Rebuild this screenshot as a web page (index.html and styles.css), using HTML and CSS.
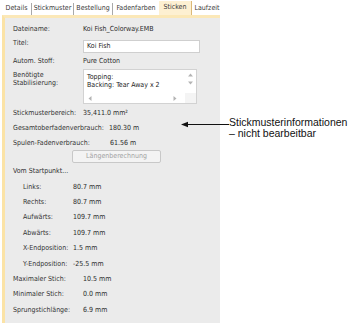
FILE: index.html
```html
<!DOCTYPE html>
<html lang="de">
<head>
<meta charset="utf-8">
<title>Sticken</title>
<link rel="stylesheet" href="styles.css">
</head>
<body>
<div class="screen">
  <div class="dialog">
    <div class="tabs">
      <div class="tab t1">Details</div>
      <div class="tab t2">Stickmuster</div>
      <div class="tab t3">Bestellung</div>
      <div class="tab t4">Fadenfarben</div>
      <div class="tab t5 active">Sticken</div>
      <div class="tab t6">Laufzeit</div>
    </div>
    <div class="panel">
      <div class="row r-file"><span class="lbl">Dateiname:</span><span class="val">Koi Fish_Colorway.EMB</span></div>
      <div class="row r-title"><span class="lbl lbl-top">Titel:</span><div class="input">Koi Fish</div></div>
      <div class="row r-auto"><span class="lbl">Autom. Stoff:</span><span class="val">Pure Cotton</span></div>
      <div class="row r-stab">
        <span class="lbl lbl-two">Benötigte<br>Stabilisierung:</span>
        <div class="listbox">
          <div class="lb-text">Topping:<br>Backing: Tear Away x 2</div>
          <div class="lb-vscroll">
            <svg width="5" height="4" viewBox="0 0 5 4"><path d="M0 3.5 L2.5 0.5 L5 3.5Z" fill="#b4b4b4"/></svg>
            <svg width="5" height="4" viewBox="0 0 5 4"><path d="M0 0.5 L2.5 3.5 L5 0.5Z" fill="#b4b4b4"/></svg>
          </div>
          <div class="lb-hscroll">
            <svg width="4" height="5" viewBox="0 0 4 5"><path d="M3.5 0 L0.5 2.5 L3.5 5Z" fill="#b4b4b4"/></svg>
            <svg width="4" height="5" viewBox="0 0 4 5"><path d="M0.5 0 L3.5 2.5 L0.5 5Z" fill="#b4b4b4"/></svg>
          </div>
          <div class="lb-corner"></div>
        </div>
      </div>
      <div class="row r-area"><span class="lbl">Stickmusterbereich:</span><span class="val">35,411.0 mm²</span></div>
      <div class="row r-total"><span class="lbl lbl-wide">Gesamtoberfadenverbrauch:</span><span class="val">180.30 m</span></div>
      <div class="row r-bobbin"><span class="lbl lbl-wide2">Spulen-Fadenverbrauch:</span><span class="val">61.56 m</span></div>
      <div class="row r-btn"><div class="btn">Längenberechnung</div></div>
      <div class="row r-start"><span class="lbl">Vom Startpunkt...</span></div>
      <div class="row r-sub"><span class="lbl lbl-sub">Links:</span><span class="val">80.7 mm</span></div>
      <div class="row r-sub"><span class="lbl lbl-sub">Rechts:</span><span class="val">80.7 mm</span></div>
      <div class="row r-sub"><span class="lbl lbl-sub">Aufwärts:</span><span class="val">109.7 mm</span></div>
      <div class="row r-sub"><span class="lbl lbl-sub">Abwärts:</span><span class="val">109.7 mm</span></div>
      <div class="row r-sub"><span class="lbl lbl-sub">X-Endposition:</span><span class="val">1.5 mm</span></div>
      <div class="row r-sub"><span class="lbl lbl-sub">Y-Endposition:</span><span class="val">-25.5 mm</span></div>
      <div class="row r-sub"><span class="lbl">Maximaler Stich:</span><span class="val">10.5 mm</span></div>
      <div class="row r-sub"><span class="lbl">Minimaler Stich:</span><span class="val">0.0 mm</span></div>
      <div class="row r-sub"><span class="lbl">Sprungstichlänge:</span><span class="val">6.9 mm</span></div>
    </div>
  </div>
  <div class="callout">
    <svg class="arrow" width="48" height="7" viewBox="0 0 48 7"><path d="M0 3.5 L7 0.8 L7 6.2Z" fill="#111"/><rect x="6" y="3" width="42" height="1" fill="#111"/></svg>
    <div class="note">Stickmusterinformationen<br>– nicht bearbeitbar</div>
  </div>
</div>
</body>
</html>
```
FILE: styles.css
```css
html, body {
  margin: 0;
  padding: 0;
  background: #ffffff;
}
.screen {
  position: relative;
  width: 362px;
  height: 335px;
  overflow: hidden;
  font-family: "DejaVu Sans Condensed", "DejaVu Sans", sans-serif;
  font-stretch: condensed;
  font-size: 7px;
  color: #333333;
}
.dialog {
  width: 222px;
}
.tabs {
  display: flex;
  align-items: flex-end;
  height: 15px;
  margin-left: 2px;
}
.tab {
  box-sizing: border-box;
  height: 12px;
  line-height: 11px;
  text-align: center;
  border-right: 1px solid #a9a9a9;
  white-space: nowrap;
  color: #3a3a3a;
}
.t1 { width: 30px; }
.t2 { width: 42px; }
.t3 { width: 39px; }
.t4 { width: 46px; border-right: none; }
.t5 { width: 33px; }
.t6 { width: 30px; border-right: none; }
.tab.active {
  height: 14px;
  line-height: 13px;
  background: #fdf0d2;
  border-right: 1px solid #dcb978;
}
.panel {
  box-sizing: border-box;
  margin-left: 2px;
  width: 218px;
  height: 308px;
  background: #ebebeb;
  border-top: 3px solid #fbe8b8;
  border-left: 3px solid #fbe3a6;
  padding: 4px 0 0 8px;
}
.row {
  display: flex;
  align-items: center;
  white-space: nowrap;
}
.lbl {
  display: block;
  width: 70px;
  flex: none;
}
.val {
  color: #2a2a2a;
}
.r-file { height: 14px; }
.r-title { height: 19px; align-items: flex-start; }
.lbl-top { margin-top: 2px; line-height: 10px; }
.input {
  box-sizing: border-box;
  margin-top: 4px;
  width: 117px;
  height: 13px;
  background: #ffffff;
  border: 1px solid #cfcfcf;
  padding-left: 3px;
  line-height: 11px;
  color: #222;
}
.r-auto { height: 11px; }
.r-stab { height: 39px; align-items: flex-start; }
.lbl-two { line-height: 8px; margin-top: 5px; }
.listbox {
  box-sizing: border-box;
  margin-top: 3px;
  width: 114px;
  height: 35px;
  background: #ffffff;
  border: 1px solid #d2d2d2;
  display: grid;
  grid-template-columns: 1fr 11px;
  grid-template-rows: 1fr 10px;
}
.lb-text {
  padding: 3px 0 0 3px;
  line-height: 8px;
  color: #222;
}
.lb-vscroll {
  display: flex;
  flex-direction: column;
  align-items: center;
  gap: 4px;
  padding-top: 3px;
}
.lb-hscroll {
  display: flex;
  align-items: center;
  justify-content: space-between;
  padding: 0 8px 0 4px;
}
.lb-corner { background: #f4f4f4; }
.r-area { height: 15px; }
.r-total { height: 15px; }
.lbl-wide { width: 96px; }
.r-bobbin { height: 15px; }
.lbl-wide2 { width: 97px; }
.r-btn { height: 13px; align-items: stretch; }
.btn {
  box-sizing: border-box;
  margin-left: 59px;
  width: 89px;
  background: #f3f3f3;
  border: 1px solid #c8c8c8;
  border-radius: 2px;
  color: #a2a2a2;
  text-align: center;
  line-height: 11px;
}
.r-start { height: 16px; }
.r-sub { height: 15.4px; }
.lbl-sub { width: 50px; padding-left: 10px; }
.callout {
  position: absolute;
  left: 181px;
  top: 117px;
  display: flex;
  align-items: flex-start;
}
.arrow {
  display: block;
  margin-top: 4px;
}
.note {
  font-family: "Liberation Sans", Arial, sans-serif;
  font-stretch: normal;
  font-size: 10.5px;
  line-height: 11px;
  color: #111;
}
```
